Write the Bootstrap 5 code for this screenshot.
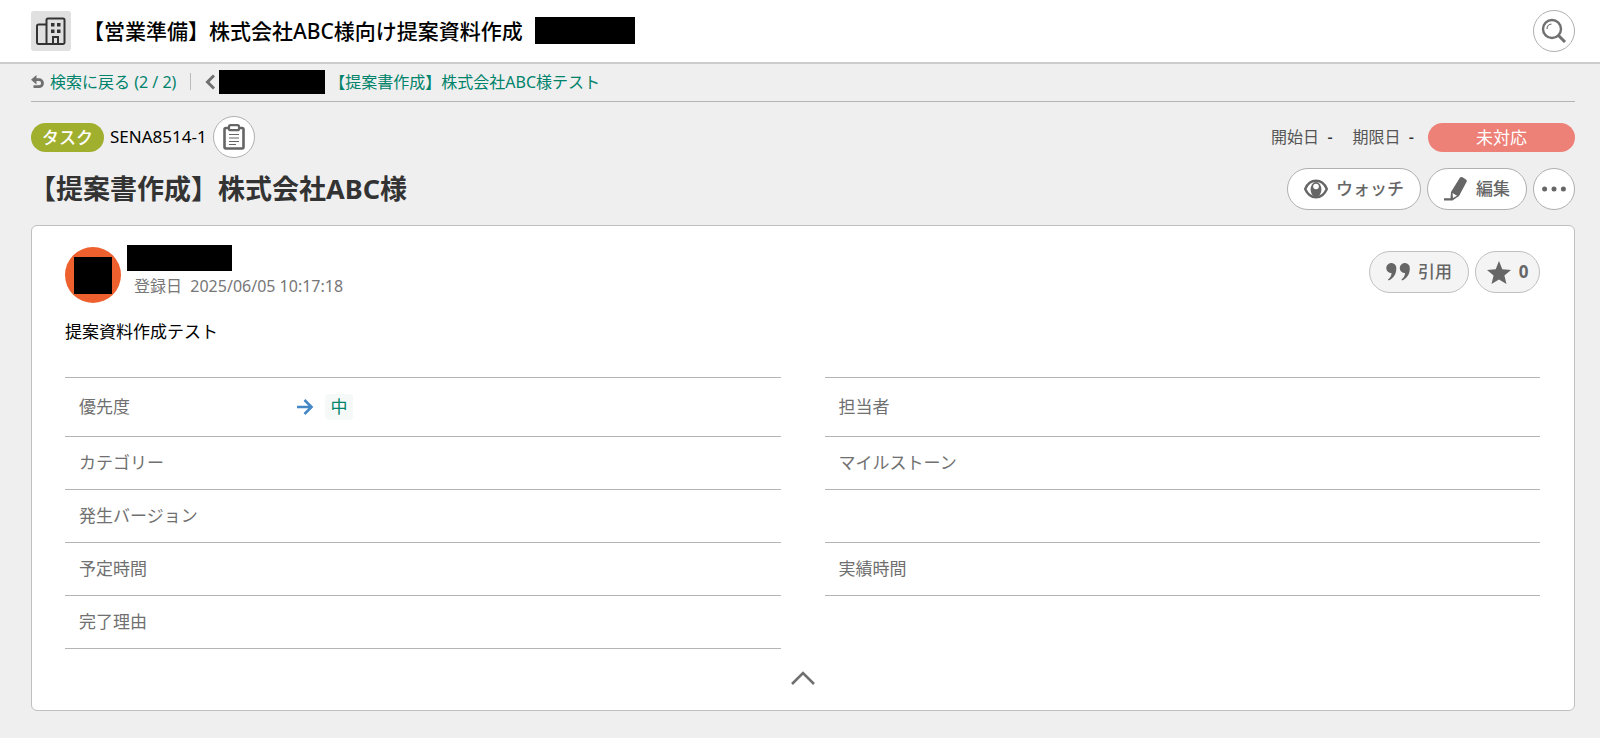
<!DOCTYPE html>
<html lang="ja">
<head>
<meta charset="utf-8">
<meta name="viewport" content="width=device-width, initial-scale=1">
<title>【提案書作成】株式会社ABC様</title>
<link href="https://cdn.jsdelivr.net/npm/bootstrap@5.3.0/dist/css/bootstrap.min.css" rel="stylesheet">
<style>
  body { background: #efefef; color: #000; font-family: "Noto Sans", "Noto Sans CJK JP", sans-serif; font-size: 17px; line-height: 24px; }
  svg { display: block; flex: none; }
  .page-x { padding-left: 31px; padding-right: 25px; }
  .top-bar { background: #fff; border-bottom: 2px solid #ccc; height: 64px; padding-bottom: 1px; }
  .project-icon { width: 40px; height: 40px; background: #e0e0e0; border-radius: 3px; }
  .project-name { font-size: 21px; font-weight: 500; margin: 0 12px; line-height: 28px; }
  .redacted { background: #000; flex: none; }
  .crumbs { height: 38px; padding-bottom: 2px; border-bottom: 1px solid #b4b4b4; font-size: 16px; }
  .crumbs a { color: #00836b; text-decoration: none; }
  .crumbs .rule { width: 1px; height: 17px; background: #bbb; margin: 0 14px; }
  .crumbs .back { gap: 6px; }
  .meta-row { margin-top: 14px; }
  .title-row { margin-top: 10px; }
  .gap-tight { gap: 6px; }
  .pill { height: 29px; border-radius: 15px; color: #fff; line-height: 29px; text-align: center; }
  .pill-type { background: #a1af2f; width: 73px; font-weight: 500; }
  .pill-status { background: #ed8077; width: 147px; margin-left: 14px; }
  .round-btn { height: 42px; min-width: 42px; border: 1px solid #b0b0b0; border-radius: 21px; background: #fff; color: #666; font-size: 17px; font-weight: 500; padding: 0; display: flex; align-items: center; justify-content: center; }
  .round-btn.soft { background: #f4f4f4; border-color: #c0c0c0; }
  .w-watch { width: 134px; } .w-mid { width: 100px; } .w-star { width: 65px; }
  .dates { font-size: 16px; color: #555; }
  .dates b { color: #333; font-weight: 500; }
  .issue-title { font-size: 27px; font-weight: 700; color: #333; line-height: 42px; margin: 0 0 0 -2px; }
  .issue-card { border: 1px solid #c0c0c0; border-radius: 6px; background: #fff; padding: 19px 34px 0 33px; margin-top: 15px; }
  .avatar { width: 56px; height: 56px; border-radius: 50%; background: #ee602d; margin: 2px 6px 0 0; }
  .muted { color: #777; font-size: 16px; margin: 3px 0 0 7px; }
  .reactions { padding-top: 6px; }
  .description { margin: 17px 0 0; padding-bottom: 33px; }
  .fields { column-gap: 44px; }
  .fields dl { flex: 1 1 0; margin: 0; border-top: 1px solid #b4b4b4; }
  .fields .line { border-bottom: 1px solid #b4b4b4; height: 53px; padding-left: 14px; }
  .fields .line:first-child { height: 59px; }
  .fields dt { width: 216px; font-weight: 400; color: #707070; }
  .prio { background: #f5f9f8; color: #00836b; border-radius: 4px; width: 28px; height: 26px; line-height: 26px; text-align: center; text-decoration: none; }
  .fold { height: 61px; }
</style>
</head>
<body>
<header class="top-bar page-x d-flex align-items-center">
  <div class="project-icon d-flex align-items-center justify-content-center">
    <svg width="30" height="30" viewBox="0 0 30 30" fill="none" stroke="#333" stroke-width="2"><path d="M11 28H2a1.500 1.500 0 0 1-1-1.500V10A1.500 1.500 0 0 1 2.500 8.500h8M10.500 28V4A1.500 1.500 0 0 1 12 2.500h15A1.500 1.500 0 0 1 28.500 4v22.500A1.500 1.500 0 0 1 27 28H10.500zM17 28v-7h5v7"/><path d="M15 7h3.500v3.500H15zM21 7h3.500v3.500H21zM15 13.500h3.500V17H15zM21 13.500h3.500V17H21z" fill="#333" stroke="none"/></svg>
  </div>
  <h1 class="project-name">【営業準備】株式会社ABC様向け提案資料作成</h1>
  <span class="redacted" style="width:100px;height:27px"></span>
  <button class="round-btn ms-auto" aria-label="検索">
    <svg width="26" height="26" viewBox="0 0 26 26" fill="none" stroke="#707070"><circle cx="11" cy="11" r="9" stroke-width="2.400"/><path d="M6 11a5 5 0 0 1 4.500-5" stroke-width="1.200"/><path d="M17.500 17.500l6.500 6.500" stroke-width="3"/></svg>
  </button>
</header>

<main class="page-x pb-4">
  <nav class="crumbs d-flex align-items-center" aria-label="検索結果">
    <a href="#" class="back d-flex align-items-center"><svg width="13" height="14" viewBox="0 0 13 14" fill="none" stroke="#707070" stroke-width="2.800"><path d="M2 4.700h6a3.500 3.500 0 0 1 0 7H2.500"/><path d="M0 4.700L5.500 0v9.400z" fill="#707070" stroke="none"/></svg>検索に戻る (2 / 2)</a>
    <span class="rule"></span>
    <a href="#" class="d-flex align-items-center"><svg class="me-1" width="10" height="16" viewBox="0 0 10 16" fill="none" stroke="#707070" stroke-width="3"><path d="M9 1.500L2.500 8 9 14.500"/></svg><span class="redacted" style="width:106px;height:24px"></span><span class="ms-1">【提案書作成】株式会社ABC様テスト</span></a>
  </nav>

  <div class="d-flex align-items-center meta-row">
    <div class="d-flex align-items-center gap-tight">
      <span class="pill pill-type">タスク</span>
      <span>SENA8514-1</span>
      <button class="round-btn" aria-label="課題キーをコピー">
        <svg width="22" height="26" viewBox="0 0 22 26" fill="none" stroke="#666"><rect x="1.500" y="4" width="19" height="20.500" rx="1.500" stroke-width="2.600"/><rect x="6" y="1.200" width="10" height="5" rx="1.500" fill="#fff" stroke-width="2.200"/><path d="M6 10.500h10M6 14h10M6 17.500h10M6 20.500h7" stroke-width="1.200"/></svg>
      </button>
    </div>
    <div class="dates ms-auto d-flex">
      <span>開始日 &nbsp;<b>-</b></span><span class="ms-3 ps-1">期限日 &nbsp;<b>-</b></span>
    </div>
    <span class="pill pill-status">未対応</span>
  </div>

  <div class="d-flex align-items-center justify-content-between title-row">
    <h2 class="issue-title">【提案書作成】株式会社ABC様</h2>
    <div class="d-flex gap-tight">
      <button class="round-btn w-watch"><svg class="me-2" width="24" height="20" viewBox="0 0 24 20"><path d="M1.200 10C3.500 4.500 7.500 1.800 12 1.800S20.500 4.500 22.800 10C20.500 15.500 16.500 18.200 12 18.200S3.500 15.500 1.200 10z" fill="none" stroke="#666" stroke-width="2.400"/><ellipse cx="12" cy="10.500" rx="5.400" ry="7.500" fill="#666"/><circle cx="12" cy="7.500" r="2.800" fill="#fff"/></svg><span>ウォッチ</span></button>
      <button class="round-btn w-mid"><svg class="me-2" width="24" height="26" viewBox="0 0 24 26" fill="#666"><path d="M16 1.500Q17 .5 18.500 1.300L22 3.500Q23.500 4.500 22.500 6L15 20l-6.500 4.500H0v-2.300h6.500L7 16z"/><path d="M8.500 17l4.500 2.700-4 2.300z" fill="#fff"/></svg><span>編集</span></button>
      <button class="round-btn" aria-label="その他"><svg width="24" height="6" viewBox="0 0 24 6" fill="#666"><circle cx="2.600" cy="3" r="2.500"/><circle cx="12" cy="3" r="2.500"/><circle cx="21.400" cy="3" r="2.500"/></svg></button>
    </div>
  </div>

  <section class="issue-card">
    <div class="d-flex align-items-start">
      <div class="avatar d-flex align-items-center justify-content-center"><span class="redacted" style="width:38px;height:37px"></span></div>
      <div>
        <span class="redacted d-block" style="width:105px;height:26px"></span>
        <div class="muted">登録日&nbsp; 2025/06/05 10:17:18</div>
      </div>
      <div class="d-flex ms-auto gap-tight reactions">
        <button class="round-btn soft w-mid"><svg class="me-2" width="24" height="18" viewBox="0 0 24 18" fill="#666"><path id="q" d="M5 0a5 5 0 0 1 5.300 5.500C10.300 11 7.500 15.500 2.500 17.500L2 16.500C4.500 14.500 5.500 12.500 5.500 10A5 5 0 1 1 5 0z"/><use href="#q" x="13.500"/></svg><span>引用</span></button>
        <button class="round-btn soft w-star"><svg class="me-2" width="24" height="23" viewBox="0 0 24 23" fill="#666"><path d="M12 0l3.300 8.200L24 9l-6.600 5.600 2.100 8.400L12 18.500 4.500 23l2.100-8.400L0 9l8.700-.8z"/></svg><span class="fw-bold">0</span></button>
      </div>
    </div>
    <p class="description">提案資料作成テスト</p>
    <div class="fields d-flex align-items-start">
      <dl>
        <div class="line d-flex align-items-center"><dt>優先度</dt><dd class="d-flex align-items-center mb-0"><svg width="22" height="16" viewBox="0 0 22 16" fill="none" stroke="#4488c5" stroke-width="2.600"><path d="M2 8h15M9.500 1L16.500 8l-7 7"/></svg><a href="#" class="prio ms-2">中</a></dd></div>
        <div class="line d-flex align-items-center"><dt>カテゴリー</dt><dd class="mb-0"></dd></div>
        <div class="line d-flex align-items-center"><dt>発生バージョン</dt><dd class="mb-0"></dd></div>
        <div class="line d-flex align-items-center"><dt>予定時間</dt><dd class="mb-0"></dd></div>
        <div class="line d-flex align-items-center"><dt>完了理由</dt><dd class="mb-0"></dd></div>
      </dl>
      <dl>
        <div class="line d-flex align-items-center"><dt>担当者</dt><dd class="mb-0"></dd></div>
        <div class="line d-flex align-items-center"><dt>マイルストーン</dt><dd class="mb-0"></dd></div>
        <div class="line"></div>
        <div class="line d-flex align-items-center"><dt>実績時間</dt><dd class="mb-0"></dd></div>
      </dl>
    </div>
    <button class="btn border-0 d-block mx-auto px-2 pt-0 pb-1 fold" aria-label="折りたたむ"><svg width="24" height="14" viewBox="0 0 24 14" fill="none" stroke="#707070" stroke-width="2.600"><path d="M1 13L12 2l11 11"/></svg></button>
  </section>
</main>
<script src="https://cdn.jsdelivr.net/npm/bootstrap@5.3.0/dist/js/bootstrap.bundle.min.js"></script>
</body>
</html>
